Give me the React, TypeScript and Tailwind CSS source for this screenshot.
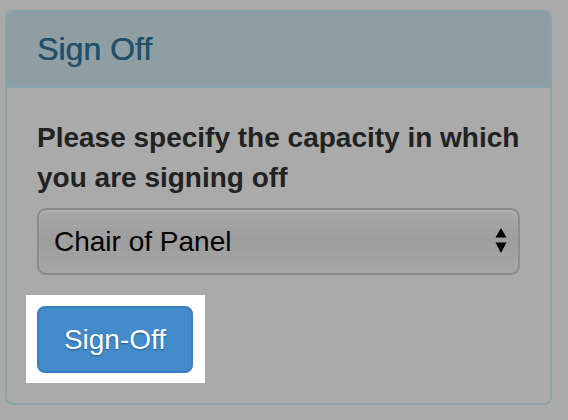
export default function App() {
  return (
    <div className="min-h-[420px] bg-[#aaaaaa] pt-[10px] pl-[5px] pr-[16px] pb-[15px] font-['Liberation_Sans',Arial,sans-serif]">
      <div className="w-[547px] rounded-[8px] border-2 border-[#86a4aa] overflow-hidden">
        {/* header */}
        <div className="bg-[#8f9ea3] border-b-2 border-[#86a4aa] px-[30px] pt-[20px] pb-[19px]">
          <h3 className="text-[32px] leading-[35px] text-[#22506a] [text-shadow:0.4px_0_0_#22506a]">Sign Off</h3>
        </div>

        {/* body */}
        <div className="p-[30px]">
          <label className="block text-[28px] leading-[40px] font-bold text-[#222222] mb-[10px]">
            Please specify the capacity in which you are signing off
          </label>
          <div className="relative mb-[31px]">
            <select
              className="block w-[483px] h-[67px] appearance-none rounded-[9px] border-2 border-[#8c8c8c] bg-gradient-to-b from-[#a8a8a8] via-[#9d9d9d] to-[#a7a7a7] pl-[15px] text-[28px] text-black shadow-[inset_0_2px_3px_rgba(255,255,255,0.15)] outline-none"
              defaultValue="chair"
            >
              <option value="chair">Chair of Panel</option>
            </select>
            <svg className="absolute left-[458px] top-[20px] pointer-events-none" width="12" height="26" viewBox="0 0 12 26">
              <path d="M6 0 L11.5 9.5 L0.5 9.5 Z" fill="#000" />
              <path d="M0.5 14.5 L11.5 14.5 L6 25 Z" fill="#000" />
            </svg>
          </div>

          <div className="w-fit bg-white -ml-[11px] -mt-[11px] -mb-[10px] pl-[11px] pt-[11px] pr-[12px] pb-[10px]">
            <button className="h-[67px] w-[156px] rounded-[8px] border-2 border-[#3a7ebb] bg-[#438bca] text-[28px] text-white [text-shadow:0_1px_2px_rgba(0,0,0,0.35)]">
              Sign-Off
            </button>
          </div>
        </div>
      </div>
    </div>
  );
}
